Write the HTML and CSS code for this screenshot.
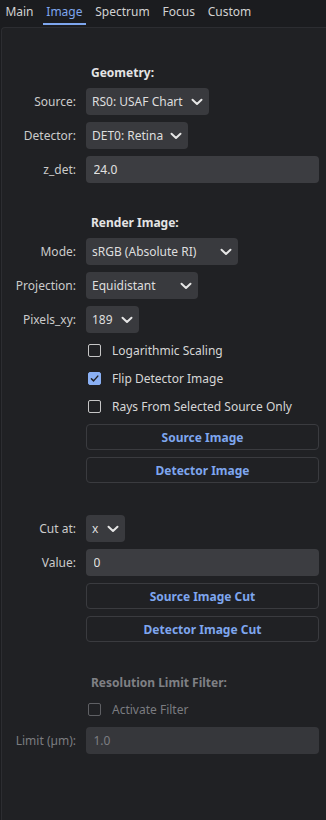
FILE: index.html
```html
<!DOCTYPE html>
<html lang="en">
<head>
    <meta charset="UTF-8">
    <meta name="viewport" content="width=device-width, initial-scale=1.0">
    <title>Image</title>
    <link rel="stylesheet" href="styles.css">
</head>
<body>
    <!-- Tab bar -->
    <nav class="tabs">
        <a class="tab"><span>Main</span></a>
        <a class="tab active"><span>Image</span></a>
        <a class="tab"><span>Spectrum</span></a>
        <a class="tab"><span>Focus</span></a>
        <a class="tab"><span>Custom</span></a>
    </nav>

    <div class="panel">
        <!-- Geometry -->
        <h3 class="section-title">Geometry:</h3>
        <div class="rows">
            <div class="row">
                <label>Source:</label>
                <div class="select w-source"><span>RS0: USAF Chart</span><svg viewBox="0 0 12 8"><path d="M1.5 1.8 L6 6 L10.5 1.8"/></svg></div>
            </div>
            <div class="row">
                <label>Detector:</label>
                <div class="select w-detector"><span>DET0: Retina</span><svg viewBox="0 0 12 8"><path d="M1.5 1.8 L6 6 L10.5 1.8"/></svg></div>
            </div>
            <div class="row">
                <label>z_det:</label>
                <input class="text-field" type="text" value="24.0">
            </div>
        </div>

        <!-- Render image -->
        <h3 class="section-title gap-top">Render Image:</h3>
        <div class="rows">
            <div class="row">
                <label>Mode:</label>
                <div class="select w-mode"><span>sRGB (Absolute RI)</span><svg viewBox="0 0 12 8"><path d="M1.5 1.8 L6 6 L10.5 1.8"/></svg></div>
            </div>
            <div class="row">
                <label>Projection:</label>
                <div class="select w-proj"><span>Equidistant</span><svg viewBox="0 0 12 8"><path d="M1.5 1.8 L6 6 L10.5 1.8"/></svg></div>
            </div>
            <div class="row">
                <label>Pixels_xy:</label>
                <div class="select w-pixels"><span>189</span><svg viewBox="0 0 12 8"><path d="M1.5 1.8 L6 6 L10.5 1.8"/></svg></div>
            </div>
            <div class="row check-row">
                <span></span>
                <div class="check"><span class="box"></span>Logarithmic Scaling</div>
            </div>
            <div class="row check-row">
                <span></span>
                <div class="check"><span class="box checked"><svg viewBox="0 0 12 12"><path d="M2.6 6.2 L5 8.6 L9.6 3.4"/></svg></span>Flip Detector Image</div>
            </div>
            <div class="row check-row">
                <span></span>
                <div class="check"><span class="box"></span>Rays From Selected Source Only</div>
            </div>
            <div class="row btn-row">
                <span></span>
                <button class="action-btn">Source Image</button>
            </div>
            <div class="row btn-row">
                <span></span>
                <button class="action-btn">Detector Image</button>
            </div>
        </div>

        <!-- Cut -->
        <div class="rows gap-cut">
            <div class="row">
                <label>Cut at:</label>
                <div class="select w-cut"><span>x</span><svg viewBox="0 0 12 8"><path d="M1.5 1.8 L6 6 L10.5 1.8"/></svg></div>
            </div>
            <div class="row">
                <label>Value:</label>
                <input class="text-field" type="text" value="0">
            </div>
            <div class="row btn-row">
                <span></span>
                <button class="action-btn">Source Image Cut</button>
            </div>
            <div class="row btn-row">
                <span></span>
                <button class="action-btn">Detector Image Cut</button>
            </div>
        </div>

        <!-- Resolution limit (disabled) -->
        <h3 class="section-title gap-res disabled">Resolution Limit Filter:</h3>
        <div class="rows res-rows disabled">
            <div class="row check-row">
                <span></span>
                <div class="check"><span class="box"></span>Activate Filter</div>
            </div>
            <div class="row">
                <label>Limit (µm):</label>
                <input class="text-field" type="text" value="1.0" disabled>
            </div>
        </div>
    </div>
</body>
</html>
```

FILE: styles.css
```css
/* Reset */
* {
  margin: 0;
  padding: 0;
  box-sizing: border-box;
}

body {
  font-family: "Noto Sans", "DejaVu Sans", sans-serif;
  font-size: 12px;
  background: #1b1c1f;
  color: #d4d4d4;
  width: 326px;
  height: 820px;
  overflow: hidden;
  display: flex;
  flex-direction: column;
}

/* Tabs */
.tabs {
  display: flex;
  height: 27px;
  margin-left: -1px;
}

.tab {
  padding: 0 2.6px;
  display: flex;
  color: #d2d2d2;
}

.tab span {
  display: flex;
  align-items: center;
  padding: 0 3.8px;
  height: 25px;
  border-bottom: 2px solid transparent;
}

.tab.active span {
  color: #7ea6ee;
  border-bottom-color: #7ea6ee;
}

/* Panel */
.panel {
  flex: 1;
  background: #202124;
  border-top: 1px solid #2c2d31;
  border-left: 1px solid #2c2d31;
  border-top-left-radius: 4px;
  margin-left: 1px;
  padding: 36px 7px 0 0;
}

.section-title {
  font-size: 12px;
  font-weight: 700;
  color: #e4e4e4;
  line-height: 17px;
  margin-left: 89px;
  margin-bottom: 7px;
}

.section-title.gap-top {
  margin-top: 31px;
}

.section-title.gap-res {
  margin-top: 32px;
  margin-bottom: 8px;
}

.rows {
  display: flex;
  flex-direction: column;
  gap: 7px;
}

.rows.gap-cut {
  margin-top: 32px;
}

.row {
  display: grid;
  grid-template-columns: 74px 1fr;
  column-gap: 10px;
  align-items: center;
  justify-items: start;
  height: 27px;
}

.row label {
  justify-self: end;
  color: #cbcbcb;
}

.check-row {
  height: 21px;
}

.btn-row {
  height: 26px;
}

/* Combo boxes */
.select {
  height: 27px;
  background: #393a3e;
  border-radius: 4px;
  display: flex;
  align-items: center;
  justify-content: space-between;
  padding: 0 6px 0 6px;
  color: #dedede;
  white-space: nowrap;
}

.select svg {
  width: 12px;
  height: 8px;
  fill: none;
  stroke: #e6e6e6;
  stroke-width: 2;
  stroke-linecap: round;
  stroke-linejoin: round;
}

.w-source { width: 123px; }
.w-detector { width: 102px; }
.w-mode { width: 152px; }
.w-proj { width: 112px; }
.w-pixels { width: 53px; }
.w-cut { width: 39px; }

/* Text fields */
.text-field {
  width: 100%;
  height: 27px;
  border: none;
  outline: none;
  border-radius: 4px;
  background: #3c3d41;
  color: #e2e2e2;
  font-family: inherit;
  font-size: 12px;
  padding: 0 7.5px;
}

.text-field:disabled {
  background: #36373b;
  color: #7d7e82;
}

/* Checkboxes */
.check {
  display: flex;
  align-items: center;
  gap: 11px;
  padding-left: 2px;
  color: #d6d6d6;
}

.box {
  width: 13px;
  height: 13px;
  border: 1.5px solid #c6c6c6;
  border-radius: 2px;
  display: flex;
  align-items: center;
  justify-content: center;
}

.box.checked {
  background: #8ab0f4;
  border-color: #8ab0f4;
}

.box svg {
  width: 11px;
  height: 11px;
  fill: none;
  stroke: #1f2024;
  stroke-width: 1.6;
  stroke-linecap: round;
  stroke-linejoin: round;
}

/* Buttons */
.action-btn {
  width: 100%;
  height: 26px;
  background: transparent;
  border: 1px solid #3a3b3f;
  border-radius: 4px;
  color: #7ea6ee;
  font-family: inherit;
  font-size: 12px;
  font-weight: 700;
}

/* Disabled section */
.disabled,
.disabled .check,
.disabled label {
  color: #7b7c80;
}

.section-title.disabled {
  color: #7f8084;
}

.disabled .box {
  border-color: #5f6064;
}
```
